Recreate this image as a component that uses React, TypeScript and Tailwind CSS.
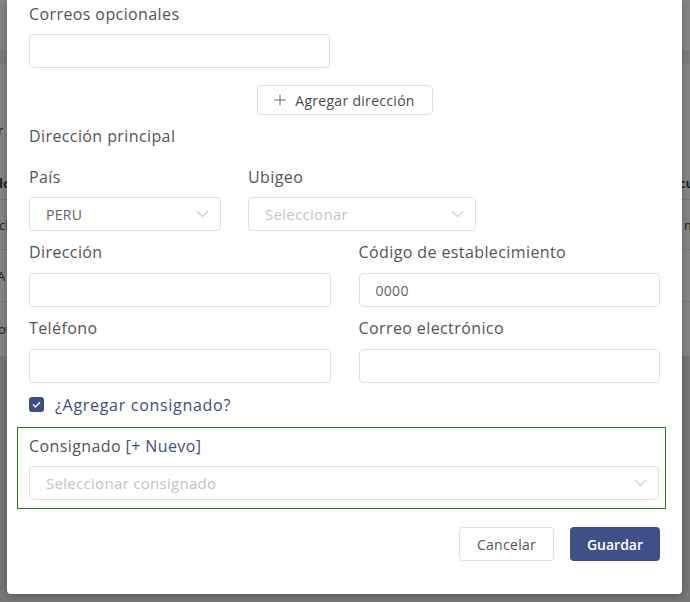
import React from "react";

const font = { fontFamily: '"Open Sans", "Liberation Sans", sans-serif' };

function Chevron() {
  return (
    <svg width="13" height="8" viewBox="0 0 13 8" fill="none" className="shrink-0">
      <path d="M1 1.2 L6.5 6.6 L12 1.2" stroke="#c0c4cc" strokeWidth="1.1" />
    </svg>
  );
}

function Label({ children }: { children: React.ReactNode }) {
  return (
    <div className="h-5 text-[16px] leading-5 tracking-[0.4px] text-[#555]">{children}</div>
  );
}

function TextInput({ value, className = "" }: { value?: string; className?: string }) {
  return (
    <div
      className={`h-[34px] rounded border border-[#dcdfe6] bg-white px-4 flex items-center text-[14px] tracking-[0.3px] text-[#606266] ${className}`}
    >
      {value}
    </div>
  );
}

function SelectBox({
  value,
  placeholder,
  className = "",
}: {
  value?: string;
  placeholder?: string;
  className?: string;
}) {
  return (
    <div
      className={`h-[34px] rounded border border-[#dcdfe6] bg-white pl-4 pr-[11px] flex items-center justify-between text-[15px] tracking-[0.3px] ${className}`}
    >
      {value ? (
        <span className="text-[14px] text-[#606266]">{value}</span>
      ) : (
        <span className="text-[#c0c4cc]">{placeholder}</span>
      )}
      <Chevron />
    </div>
  );
}

function BackgroundPage() {
  // tabla de la página, oscurecida por el backdrop
  return (
    <div className="absolute inset-0 flex flex-col text-[13px] text-[#1f1f1f]">
      <div className="h-[356px] bg-[#858585] flex flex-col">
        <div className="h-[50px]" />
        <div className="h-[14px] bg-[#7c7c7c]" />
        <div className="h-[136px] border-b border-[#777] flex flex-col justify-between pb-2 pt-[58px]">
          <div className="flex justify-between leading-4">
            <span className="-ml-[2px]">r</span>
            <span />
          </div>
          <div className="flex justify-between leading-4 font-bold">
            <span className="-ml-[1px]">lo</span>
            <span className="-mr-[4px]">cu</span>
          </div>
        </div>
        <div className="h-[50px] border-b border-[#777] flex items-center justify-between leading-4">
          <span className="-ml-[1px]">cl</span>
          <span className="-mr-[6px]">m</span>
        </div>
        <div className="h-[52px] border-b border-[#777] flex items-center justify-between leading-4">
          <span className="-ml-[3px]">A</span>
          <span />
        </div>
        <div className="flex-1 flex items-center justify-between leading-4">
          <span className="-ml-[2px]">ot</span>
          <span />
        </div>
      </div>
      <div className="flex-1 bg-[#767676]" />
    </div>
  );
}

export default function App() {
  return (
    <div className="relative w-[690px] h-[602px] overflow-hidden bg-[#767676]" style={font}>
      <BackgroundPage />

      <div className="absolute left-[7px] top-0 w-[675px] h-[594px] bg-white rounded-b shadow-[0_2px_8px_rgba(0,0,0,0.25)]">
        <div className="flex flex-col px-[22px] pt-[4px]">
          <Label>Correos opcionales</Label>
          <TextInput className="mt-[10px] w-[301px]" />

          <button className="mt-[17px] self-center h-[30px] w-[176px] rounded border border-[#dcdfe6] bg-white flex items-center justify-center gap-[9px] text-[14px] tracking-[0.3px] text-[#4a4a4a]">
            <svg width="12" height="12" viewBox="0 0 12 12" fill="none">
              <path d="M6 0.5 V11.5 M0.5 6 H11.5" stroke="#6b6b6b" strokeWidth="1" />
            </svg>
            Agregar dirección
          </button>

          <div className="mt-[11px]">
            <Label>Dirección principal</Label>
          </div>

          <div className="mt-[21px] flex gap-[27px]">
            <div className="w-[192px] flex flex-col">
              <Label>País</Label>
              <SelectBox className="mt-[10px]" value="PERU" />
            </div>
            <div className="w-[228px] flex flex-col">
              <Label>Ubigeo</Label>
              <SelectBox className="mt-[10px]" placeholder="Seleccionar" />
            </div>
          </div>

          <div className="mt-[11px] grid grid-cols-2 gap-x-[28px]">
            <div className="flex flex-col">
              <Label>Dirección</Label>
              <TextInput className="mt-[11px]" />
            </div>
            <div className="flex flex-col">
              <Label>Código de establecimiento</Label>
              <TextInput className="mt-[11px]" value="0000" />
            </div>
          </div>

          <div className="mt-[11px] grid grid-cols-2 gap-x-[28px]">
            <div className="flex flex-col">
              <Label>Teléfono</Label>
              <TextInput className="mt-[11px]" />
            </div>
            <div className="flex flex-col">
              <Label>Correo electrónico</Label>
              <TextInput className="mt-[11px]" />
            </div>
          </div>

          <div className="mt-[14px] h-[15px] flex items-center gap-[11px]">
            <div className="w-[15px] h-[15px] rounded-[3px] bg-[#3f4d86] flex items-center justify-center">
              <svg width="9" height="7" viewBox="0 0 9 7" fill="none">
                <path d="M1 3.6 L3.4 5.9 L8 1.2" stroke="white" strokeWidth="1.4" />
              </svg>
            </div>
            <span className="text-[16px] leading-5 tracking-[0.7px] text-[#3f4d86]">
              ¿Agregar consignado?
            </span>
          </div>

          <div className="mt-[15px] -ml-[12px] w-[649px] border border-[#26792a] pl-[11px] pr-[6px] pt-[8px] pb-[8px] flex flex-col">
            <div className="h-5 text-[16px] leading-5 tracking-[0.4px] text-[#555]">
              Consignado <span className="text-[#3f4d86]">[+ Nuevo]</span>
            </div>
            <SelectBox className="mt-[10px]" placeholder="Seleccionar consignado" />
          </div>

          <div className="mt-[18px] flex justify-end gap-4">
            <button className="h-[34px] w-[95px] rounded border border-[#dcdfe6] bg-white text-[14px] tracking-[0.3px] text-[#555]">
              Cancelar
            </button>
            <button className="h-[34px] w-[90px] rounded bg-[#3f4f88] text-[14px] font-semibold text-white">
              Guardar
            </button>
          </div>
        </div>
      </div>
    </div>
  );
}
